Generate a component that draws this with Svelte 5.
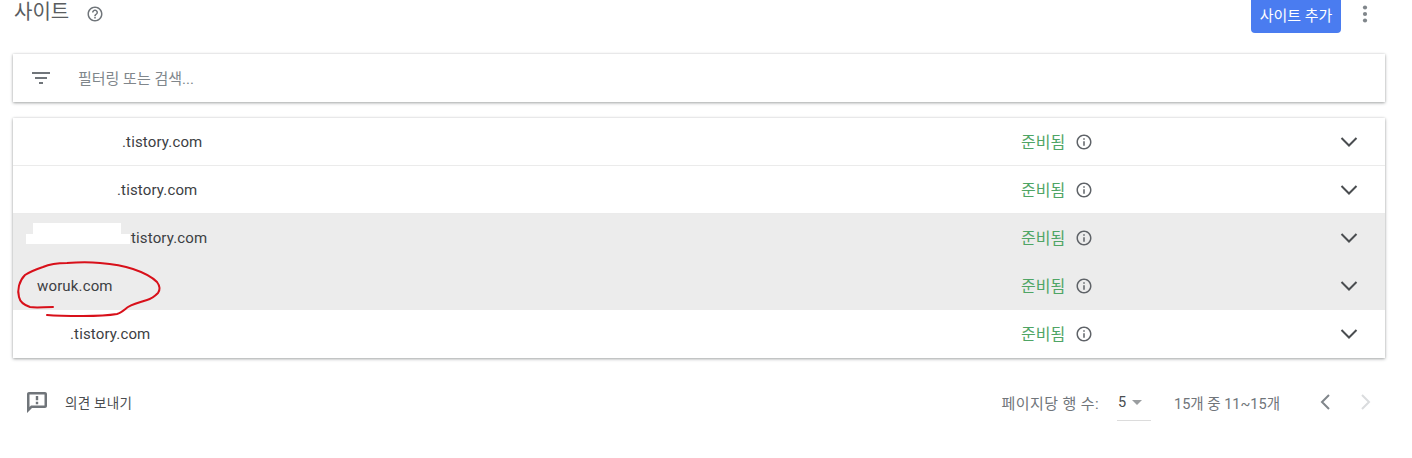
<script lang="ts">
// Site list: header, filter bar, rows and pagination footer.
// `blank` is the width left empty where the screenshot's site name was painted out.
const sites = [
  { name: ".tistory.com", blank: 109, hover: false },
  { name: ".tistory.com", blank: 104, hover: false },
  { name: "tistory.com", blank: 118, hover: true },
  { name: "woruk.com", blank: 24, hover: true },
  { name: ".tistory.com", blank: 57, hover: false },
];
</script>

<div class="page">
  <header class="top">
    <h1 class="title">사이트</h1>
    <svg class="help" viewBox="0 0 24 24" width="18" height="18" fill="#70757a">
      <path d="M11 18h2v-2h-2v2zm1-16C6.48 2 2 6.48 2 12s4.48 10 10 10 10-4.48 10-10S17.52 2 12 2zm0 18c-4.41 0-8-3.59-8-8s3.59-8 8-8 8 3.59 8 8-3.59 8-8 8zm0-14c-2.21 0-4 1.79-4 4h2c0-1.1.9-2 2-2s2 .9 2 2c0 2-3 1.75-3 5h2c0-2.25 3-2.5 3-5 0-2.21-1.79-4-4-4z" />
    </svg>
    <button class="add">사이트 추가</button>
    <svg class="more" viewBox="0 0 24 24" width="24" height="24" fill="#80868b">
      <circle cx="12" cy="5.5" r="2.1" /><circle cx="12" cy="12" r="2.1" /><circle cx="12" cy="18.5" r="2.1" />
    </svg>
  </header>

  <div class="filter card">
    <svg viewBox="0 0 18 12" width="18" height="12" fill="#70757a">
      <rect width="18" height="2" /><rect x="3" y="5" width="12" height="2" /><rect x="7" y="10" width="4" height="2" />
    </svg>
    <span class="placeholder">필터링 또는 검색...</span>
  </div>

  <div class="list card">
    {#each sites as site}
      <div class="row" class:hover={site.hover}>
        <span class="blank" style="width: {site.blank}px"></span>
        <span class="name">{site.name}</span>
        <span class="status">준비됨</span>
        <svg class="info" viewBox="0 0 24 24" width="18" height="18" fill="#5f6368">
          <path d="M11 7h2v2h-2zm0 4h2v6h-2zm1-9C6.48 2 2 6.48 2 12s4.48 10 10 10 10-4.48 10-10S17.52 2 12 2zm0 18c-4.41 0-8-3.59-8-8s3.59-8 8-8 8 3.59 8 8-3.59 8-8 8z" />
        </svg>
        <svg class="chevron" viewBox="0 0 18 12" width="18" height="12" fill="none" stroke="#4a4d50" stroke-width="2">
          <path d="M1.5 2l7.5 7.5L16.500 2" />
        </svg>
      </div>
    {/each}
    <!-- paint-outs and the hand-drawn circle sit on top of the rows -->
    <span class="patch patch-a"></span>
    <span class="patch patch-b"></span>
  </div>

  <footer class="foot">
    <svg viewBox="0 0 24 24" width="24" height="24" fill="#70757a">
      <path fill-rule="evenodd" d="M20 2H4c-1.100 0-2 .9-2 2v19l5-5h13c1.100 0 2-.9 2-2V4c0-1.100-.9-2-2-2zM19.500 15.500H6L4.500 17V4.500h15zM10.800 11.800h2.400v2.400h-2.400zM10.800 6h2.400v4.200h-2.400z" />
    </svg>
    <span class="feedback">의견 보내기</span>
    <span class="per-page">페이지당 행 수:</span>
    <span class="select"><span>5</span><i class="caret"></i></span>
    <span class="range">15개 중 11~15개</span>
    <svg class="prev" viewBox="0 0 12 18" width="12" height="18" fill="none" stroke="#80868b" stroke-width="2"><path d="M10 2L3 9l7 7" /></svg>
    <svg class="next" viewBox="0 0 12 18" width="12" height="18" fill="none" stroke="#dadcde" stroke-width="2"><path d="M2 2l7 7-7 7" /></svg>
  </footer>

  <svg class="scribble" viewBox="0 0 180 70" width="180" height="70" fill="none" stroke="#d8101a" stroke-width="2" stroke-linecap="round" stroke-linejoin="round">
    <path d="M53 50C44 50 36 51 30 50C24 48 20 45 19 40C17 33 19 24 25 18C31 14 37 12 43 10C52 6 60 6 67 6C80 5 90 5 100 6C112 7 124 9 133 12C142 15 152 20 157 25C160 29 160 33 158 36C154 40 151 42 147 43C140 45 133 47 128 50C124 53 121 56 117 57C105 59 95 59 83 59C70 59 58 59 47 58" />
  </svg>
</div>

<style>
:global(body) {
  margin: 0;
  background: #fff;
}
.page {
  position: relative;
  width: 1412px;
  height: 458px;
  padding: 0 27px 0 13px;
  box-sizing: border-box;
  overflow: hidden;
  font-family: Roboto, "Noto Sans CJK KR", sans-serif;
  color: #3c4043;
}
.top {
  display: flex;
  align-items: flex-start;
  height: 33px;
  margin-bottom: 21px;
}
.title {
  margin: 0 0 0 1px;
  font-size: 20px;
  font-weight: 400;
  line-height: 24px;
  color: #5a5d60;
}
.help {
  margin: 5px 0 0 17px;
}
.add {
  margin-left: auto;
  width: 90px;
  height: 33px;
  padding: 0 0 5px;
  border: 0;
  border-radius: 0 0 4px 4px;
  background: #4a7cf0;
  color: #fff;
  font-family: inherit;
  font-size: 15px;
}
.more {
  margin: 2px 8px 0 12px;
}
.card {
  background: #fff;
  box-shadow: 0 1px 3px rgba(60, 64, 67, 0.45), 0 0 2px rgba(60, 64, 67, 0.12);
}
.filter {
  display: flex;
  align-items: center;
  height: 48px;
  padding-left: 19px;
  margin-bottom: 16px;
}
.placeholder {
  margin-left: 28px;
  padding-bottom: 2px;
  font-size: 15px;
  color: #80868b;
}
.list {
  position: relative;
}
.row {
  display: flex;
  align-items: center;
  height: 48px;
  box-sizing: border-box;
  border-bottom: 1px solid #ebebeb;
  font-size: 15px;
}
.row:last-of-type {
  border-bottom: 0;
}
.row.hover {
  background: #ececec;
  border-bottom-color: #ececec;
}
.blank {
  flex: none;
}
.name {
  flex: 1;
  letter-spacing: 0.15px;
}
.status {
  width: 54px;
  padding-bottom: 2px;
  font-size: 16px;
  color: #4fa565;
}
.info {
  flex: none;
}
.chevron {
  margin: 0 27px 0 247px;
}
.patch {
  position: absolute;
  background: #fff;
}
.patch-a {
  left: 20px;
  top: 105px;
  width: 88px;
  height: 12px;
}
.patch-b {
  left: 13px;
  top: 116px;
  width: 104px;
  height: 10px;
}
.foot {
  display: flex;
  align-items: center;
  height: 24px;
  margin-top: 32px;
  padding-left: 12px;
  font-size: 14.500px;
  color: #70757a;
}
.feedback {
  margin-left: 16px;
  font-size: 13.500px;
  letter-spacing: 0.3px;
  color: #4a4d50;
}
.per-page {
  margin-left: auto;
  font-size: 15px;
  letter-spacing: 0.4px;
}
.select {
  position: relative;
  display: flex;
  align-items: center;
  width: 33px;
  margin-left: 18px;
  padding-left: 1px;
  color: #4a4d50;
}
.select::after {
  content: "";
  position: absolute;
  left: 0;
  right: 0;
  top: 26px;
  height: 1px;
  background: #dcdcdc;
}
.caret {
  margin-left: 6px;
  border: 5px solid transparent;
  border-top-color: #9a9da0;
  border-bottom: 0;
}
.range {
  margin-left: 23px;
}
.prev {
  margin-left: 39px;
}
.next {
  margin: 0 13px 0 29px;
}
.scribble {
  position: absolute;
  left: 0;
  top: 257px;
}
</style>
